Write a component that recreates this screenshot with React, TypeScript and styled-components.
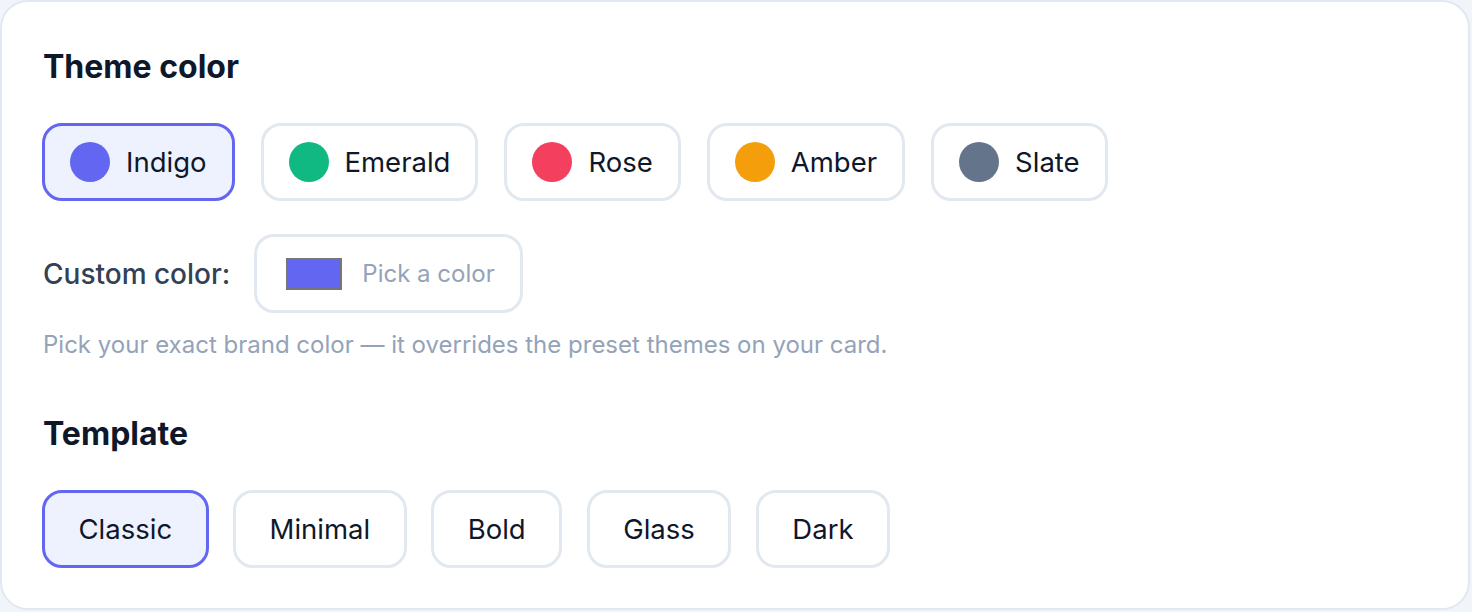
import React, { useState } from "react";
import styled, { createGlobalStyle } from "styled-components";

const GlobalStyle = createGlobalStyle`
    html, body {
        margin: 0;
        padding: 0;
        background: #f1f5f9;
    }
    body {
        font-family: Inter, "Noto Sans", "Liberation Sans", sans-serif;
        -webkit-font-smoothing: antialiased;
    }
    * {
        box-sizing: border-box;
    }
`;

const Card = styled.div`
    width: 1470px;
    height: 610px;
    background: #ffffff;
    border: 2px solid #e2e8f0;
    border-radius: 28px;
    padding: 45px 40px 0;
    display: flex;
    flex-direction: column;
`;

const Heading = styled.h2<{ $top?: number }>`
    margin: ${(p) => p.$top ?? 0}px 0 0 1px;
    font-size: 32px;
    line-height: 40px;
    font-weight: 700;
    color: #0f172a;
`;

const OptionRow = styled.div<{ $top: number; $gap: number }>`
    display: flex;
    gap: ${(p) => p.$gap}px;
    margin-top: ${(p) => p.$top}px;
`;

const Pill = styled.button<{ $active: boolean; $padX: number }>`
    height: 78px;
    display: flex;
    align-items: center;
    gap: 16px;
    padding: 0 ${(p) => p.$padX}px;
    border: 3px solid ${(p) => (p.$active ? "#6366f1" : "#e2e8f0")};
    border-radius: 20px;
    background: ${(p) => (p.$active ? "#eef2ff" : "#ffffff")};
    font-family: inherit;
    font-size: 27.5px;
    font-weight: 400;
    color: #0f172a;
    cursor: pointer;
`;

const Dot = styled.span<{ $color: string }>`
    width: 40px;
    height: 40px;
    border-radius: 50%;
    background: ${(p) => p.$color};
    flex-shrink: 0;
`;

const CustomRow = styled.div`
    display: flex;
    align-items: center;
    gap: 24px;
    margin-top: 33px;
    padding-left: 1px;
`;

const Label = styled.span`
    font-size: 28px;
    font-weight: 500;
    color: #334155;
`;

const PickerBox = styled.label`
    height: 79px;
    display: flex;
    align-items: center;
    gap: 20px;
    padding: 0 25px 0 29px;
    border: 3px solid #e2e8f0;
    border-radius: 20px;
    background: #ffffff;
    cursor: pointer;
`;

const Swatch = styled.span<{ $color: string }>`
    width: 56px;
    height: 32px;
    border: 2px solid #767676;
    background: ${(p) => p.$color};
`;

const PickerText = styled.span`
    font-size: 24px;
    color: #94a3b8;
`;

const Hint = styled.p`
    margin: 16px 0 0 1px;
    font-size: 24px;
    line-height: 32px;
    color: #94a3b8;
`;

const themes = [
    { name: "Indigo", color: "#6366f1" },
    { name: "Emerald", color: "#10b981" },
    { name: "Rose", color: "#f43f5e" },
    { name: "Amber", color: "#f59e0b" },
    { name: "Slate", color: "#64748b" },
];

const templates = ["Classic", "Minimal", "Bold", "Glass", "Dark"];

export default function App(): JSX.Element {
    const [theme, setTheme] = useState("Indigo");
    const [template, setTemplate] = useState("Classic");

    return (
        <>
            <GlobalStyle />
            <Card>
                <Heading>Theme color</Heading>
                <OptionRow $top={36} $gap={26}>
                    {themes.map((t) => (
                        <Pill
                            key={t.name}
                            $active={theme === t.name}
                            $padX={25}
                            onClick={() => setTheme(t.name)}
                        >
                            <Dot $color={t.color} />
                            {t.name}
                        </Pill>
                    ))}
                </OptionRow>
                <CustomRow>
                    <Label>Custom color:</Label>
                    <PickerBox>
                        <Swatch $color="#6366f1" />
                        <PickerText>Pick a color</PickerText>
                    </PickerBox>
                </CustomRow>
                <Hint>Pick your exact brand color — it overrides the preset themes on your card.</Hint>
                <Heading $top={53}>Template</Heading>
                <OptionRow $top={36} $gap={24.5}>
                    {templates.map((t) => (
                        <Pill
                            key={t}
                            $active={template === t}
                            $padX={33.5}
                            onClick={() => setTemplate(t)}
                        >
                            {t}
                        </Pill>
                    ))}
                </OptionRow>
            </Card>
        </>
    );
}
